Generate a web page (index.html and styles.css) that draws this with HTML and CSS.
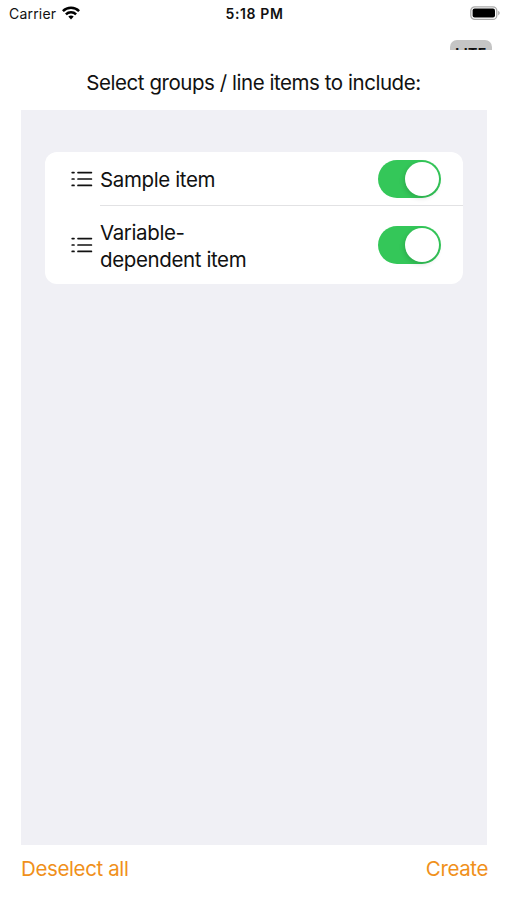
FILE: index.html
```html
<!DOCTYPE html>
<html lang="en">
<head>
  <meta charset="utf-8">
  <title>Select items</title>
  <link rel="stylesheet" href="styles.css">
</head>
<body>
  <div class="screen">
    <div class="status-bar">
      <div class="carrier">
        <span class="carrier-name">Carrier</span>
        <svg class="wifi" width="18" height="14" viewBox="0 0 18 14" fill="none" stroke="#000" stroke-width="2.5">
          <path d="M0.9 5.1C5.4 0.6 12.6 0.6 17.1 5.1"/>
          <path d="M3.9 8.3C6.7 5.5 11.3 5.5 14.1 8.3"/>
          <path d="M6.3 10.6C7.8 9.2 10.2 9.2 11.7 10.6L9 13.4Z" fill="#000" stroke="none"/>
        </svg>
      </div>
      <div class="time">5:18 PM</div>
      <div class="battery-container">
        <svg width="30" height="15" viewBox="0 0 30 15">
          <rect x="0.8" y="0.8" width="26" height="12.6" rx="4" fill="#fff" stroke="#aaa" stroke-width="1.3"/>
          <rect x="2.6" y="2.6" width="22.4" height="9" rx="2" fill="#000"/>
          <path d="M28.2 4.8C30.2 5.8 30.2 8.4 28.2 9.4Z" fill="#aaa"/>
        </svg>
      </div>
    </div>

    <div class="top-strip">
      <div class="badge">LITE</div>
    </div>

    <h1 class="title">Select groups / line items to include:</h1>

    <div class="panel">
      <div class="list">
        <label class="row">
          <svg class="list-icon" width="22" height="16" viewBox="0 0 22 16" fill="none" stroke="#111" stroke-width="1.7" stroke-linecap="round">
            <path d="M1.2 1.6H3M1.2 8H3M1.2 14.4H3M7 1.6H20.4M7 8H20.4M7 14.4H20.4"/>
          </svg>
          <span class="row-content">
            <span class="name">Sample item</span>
            <input type="checkbox" class="toggle" checked>
          </span>
        </label>
        <label class="row tall">
          <svg class="list-icon" width="22" height="16" viewBox="0 0 22 16" fill="none" stroke="#111" stroke-width="1.7" stroke-linecap="round">
            <path d="M1.2 1.6H3M1.2 8H3M1.2 14.4H3M7 1.6H20.4M7 8H20.4M7 14.4H20.4"/>
          </svg>
          <span class="row-content">
            <span class="name">Variable-<br>dependent item</span>
            <input type="checkbox" class="toggle" checked>
          </span>
        </label>
      </div>
    </div>

    <div class="footer">
      <button type="button">Deselect all</button>
      <button type="button">Create</button>
    </div>
  </div>
</body>
</html>
```
FILE: styles.css
```css
* {
  box-sizing: border-box;
}

body {
  margin: 0;
  background: #fff;
  color: #111;
  font-family: Inter, "Liberation Sans", sans-serif;
}

.screen {
  display: flex;
  flex-direction: column;
  width: 507px;
  height: 900px;
  overflow: hidden;
}

.status-bar {
  display: grid;
  grid-template-columns: 1fr auto 1fr;
  align-items: center;
  height: 28px;
  padding: 0 7px 0 9px;
}

.carrier {
  display: flex;
  align-items: center;
  gap: 6px;
  font-size: 14px;
  letter-spacing: 0.2px;
}

.carrier-name {
  margin-bottom: 2px;
}

.wifi {
  margin-bottom: 2px;
}

.time {
  margin-bottom: 2px;
  font-size: 14px;
  font-weight: 600;
  letter-spacing: 0.6px;
}

.battery-container {
  display: flex;
  justify-content: flex-end;
  margin-bottom: 1px;
}

/* only the top of the badge shows above the sheet */
.top-strip {
  display: flex;
  justify-content: flex-end;
  height: 22px;
  padding: 12px 15px 0 0;
  overflow: hidden;
}

.badge {
  width: 42px;
  height: 26px;
  background: #c5c5c5;
  border-radius: 7px;
  font-size: 14px;
  font-weight: 700;
  letter-spacing: 0.4px;
  line-height: 28px;
  text-align: center;
}

.title {
  margin: 0;
  height: 60px;
  line-height: 65px;
  font-size: 20.5px;
  font-weight: 400;
  letter-spacing: -0.45px;
  text-align: center;
  white-space: nowrap;
}

.panel {
  height: 735px;
  margin: 0 20px 0 21px;
  padding: 42px 24px;
  background: #f0f0f5;
}

.list {
  background: #fff;
  border-radius: 12px;
}

.row {
  display: flex;
  align-items: center;
  height: 54px;
  padding-left: 26px;
}

.list-icon {
  flex: none;
  margin-right: 7px;
}

.row-content {
  display: flex;
  flex: 1;
  align-items: center;
  justify-content: space-between;
  height: 100%;
  padding-right: 22px;
  border-bottom: 1px solid #e2e2e4;
}

.row.tall {
  height: 78px;
}

.tall .row-content {
  border-bottom: none;
}

.name {
  padding-top: 2px;
  font-size: 20.5px;
  letter-spacing: -0.38px;
  line-height: 27px;
}

.toggle {
  appearance: none;
  width: 63px;
  height: 38px;
  margin: 0;
  padding: 2px;
  background: #34c759;
  border-radius: 19px;
}

.toggle::before {
  content: "";
  display: block;
  width: 34px;
  height: 34px;
  margin-left: auto;
  background: #fff;
  border-radius: 50%;
  box-shadow: -1px 2px 5px rgba(0, 0, 0, 0.15);
}

.footer {
  display: flex;
  justify-content: space-between;
  height: 47px;
  padding: 0 19px 0 21px;
}

.footer button {
  padding: 0;
  background: none;
  border: none;
  color: #f0901a;
  font-family: inherit;
  font-size: 20.5px;
  letter-spacing: -0.38px;
}
```
